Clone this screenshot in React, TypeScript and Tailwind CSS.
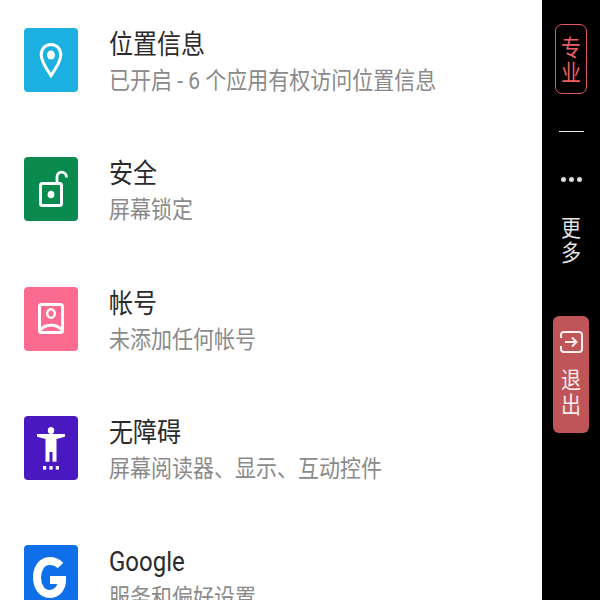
const font = { fontFamily: '"Roboto", "Noto Sans CJK SC", sans-serif' };

function Pin() {
  return (
    <svg width="54" height="64" viewBox="0 0 54 64" fill="none">
      <path d="M27 16.500c-6 0-9.800 4.600-9.800 10.600 0 6.500 5.300 14 9.800 20.500 4.500-6.500 9.800-14 9.800-20.500 0-6-3.800-10.600-9.800-10.600z" stroke="#fff" strokeWidth="3" />
      <ellipse cx="27" cy="27" rx="4" ry="4.500" fill="#fff" />
    </svg>
  );
}
function Lock() {
  return (
    <svg width="54" height="64" viewBox="0 0 54 64" fill="none">
      <rect x="16.500" y="26.500" width="21" height="22" rx="2" stroke="#fff" strokeWidth="3" />
      <ellipse cx="27" cy="37.500" rx="3.400" ry="3.800" fill="#fff" />
      <path d="M33 25v-5c0-3 2-4.800 4.500-4.800S42.500 17 42.500 20.500" stroke="#fff" strokeWidth="2.800" />
    </svg>
  );
}
function Account() {
  return (
    <svg width="54" height="64" viewBox="0 0 54 64" fill="none">
      <rect x="15.500" y="17.500" width="23" height="28" rx="2" stroke="#fff" strokeWidth="3" />
      <ellipse cx="27" cy="26.500" rx="3.800" ry="4.300" stroke="#fff" strokeWidth="2.400" />
      <path d="M16 43c3-3.500 6.500-4.800 11-4.800S35 39.500 38 43" stroke="#fff" strokeWidth="3" />
    </svg>
  );
}
function Access() {
  return (
    <svg width="54" height="64" viewBox="0 0 54 64" fill="#fff">
      <ellipse cx="27" cy="14.500" rx="3.200" ry="3.500" />
      <path d="M13 18h28v2.800l-8.500 2.200v22.700h-4V36h-3v9.700h-4V23L13 20.800z" />
      <rect x="19" y="50" width="3.200" height="3.600" />
      <rect x="25.400" y="50" width="3.200" height="3.600" />
      <rect x="31.800" y="50" width="3.200" height="3.600" />
    </svg>
  );
}
function GoogleG() {
  return (
    <svg width="54" height="64" viewBox="0 0 54 64" fill="none">
      <path d="M36.500 20.500C33.500 17.500 30 16 25.500 16 18 16 13 23.500 13 32.500 13 41.500 18 49 25.500 49 33 49 38 43 38 35H26" stroke="#fff" strokeWidth="8" />
    </svg>
  );
}

const rows = [
  { bg: "bg-[#1cb0e0]", icon: <Pin />, title: "位置信息", sub: "已开启 - 6 个应用有权访问位置信息" },
  { bg: "bg-[#0b8a50]", icon: <Lock />, title: "安全", sub: "屏幕锁定" },
  { bg: "bg-[#fb6a8f]", icon: <Account />, title: "帐号", sub: "未添加任何帐号" },
  { bg: "bg-[#4a18c0]", icon: <Access />, title: "无障碍", sub: "屏幕阅读器、显示、互动控件" },
  { bg: "bg-[#0f6fe8]", icon: <GoogleG />, title: "Google", sub: "服务和偏好设置" },
];

export default function App() {
  return (
    <div className="flex h-[600px] w-[600px] overflow-hidden bg-white" style={font}>
      <div className="flex w-[542px] shrink-0 flex-col gap-[65.3px] pl-6 pt-7">
        {rows.map((r) => (
          <div key={r.title} className="flex h-16 shrink-0 items-start gap-[31px]">
            <div className={`h-16 w-[54px] shrink-0 rounded-[4px] ${r.bg}`}>{r.icon}</div>
            <div className="flex flex-col">
              <div className="h-[39px] origin-top-left scale-y-[1.12] whitespace-nowrap text-[24px] leading-[30px] text-[#2b2b2b]">{r.title}</div>
              <div className="h-[27px] origin-top-left scale-y-[1.12] whitespace-nowrap text-[21px] leading-[26px] text-[#8a8a8a]">{r.sub}</div>
            </div>
          </div>
        ))}
      </div>
      <div className="flex w-[58px] shrink-0 flex-col items-center bg-black pt-6 text-white">
        <div className="flex h-[70px] w-8 flex-col items-center justify-center gap-[2px] rounded-[7px] border-[1.5px] border-[#e05a5f] text-[20px] leading-[23px] text-[#ef5f60]">
          <span className="translate-y-[2px] scale-y-[1.12]">专</span>
          <span className="translate-y-[2px] scale-y-[1.12]">业</span>
        </div>
        <div className="mt-[37px] h-px w-[25px] bg-[#e8e8e8]" />
        <div className="mt-[45px] flex gap-[3px]">
          <span className="size-[5px] rounded-full bg-[#dddddd]" />
          <span className="size-[5px] rounded-full bg-[#dddddd]" />
          <span className="size-[5px] rounded-full bg-[#dddddd]" />
        </div>
        <div className="mt-[34px] flex flex-col items-center text-[20px] leading-[25px] text-[#e4e4e4]">
          <span className="scale-y-[1.12]">更</span>
          <span className="scale-y-[1.12]">多</span>
        </div>
        <div className="mt-[50px] flex h-[117px] w-9 flex-col items-center rounded-[6px] bg-[#bf5558] pt-[14px] text-[#fbeeee]">
          <svg width="24" height="24" viewBox="0 0 24 24" fill="none" stroke="currentColor" strokeWidth="2">
            <path d="M2 8V5a3 3 0 0 1 3-3h15a3 3 0 0 1 3 3v14a3 3 0 0 1-3 3H5a3 3 0 0 1-3-3v-3" />
            <path d="M6 12h11M13 7.500l4.500 4.500-4.500 4.500" />
          </svg>
          <div className="mt-[14px] flex flex-col items-center text-[20px] leading-[25px]">
            <span className="scale-y-[1.12]">退</span>
            <span className="scale-y-[1.12]">出</span>
          </div>
        </div>
      </div>
    </div>
  );
}
